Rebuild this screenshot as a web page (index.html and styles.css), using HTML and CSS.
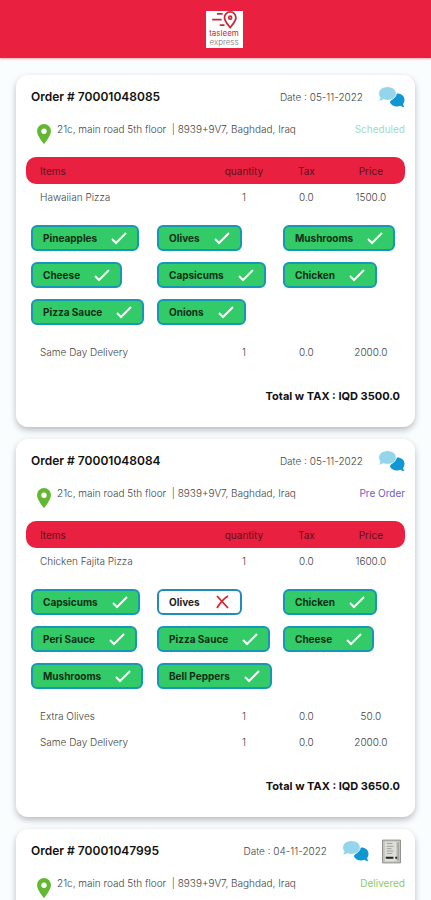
FILE: index.html
```html
<!DOCTYPE html>
<html lang="en">
<head>
<meta charset="utf-8">
<meta name="viewport" content="width=device-width, initial-scale=1">
<title>Tasleem Express orders</title>
<link rel="stylesheet" href="styles.css">
</head>
<body>
<svg class="sprite" aria-hidden="true">
  <symbol id="check" viewBox="0 0 16 14"><path d="M1 8 5 12 15 2" fill="none" stroke="#fff" stroke-width="2"/></symbol>
  <symbol id="cross" viewBox="0 0 16 14"><path d="M3 1 14 13M14 1C9 4 6 8 3 13" fill="none" stroke="#d5272f" stroke-width="1.8"/></symbol>
  <symbol id="pin" viewBox="0 0 14 20"><path fill="#63b832" fill-rule="evenodd" d="M7 0a7 7 0 0 0-7 7c0 5 7 13 7 13s7-8 7-13a7 7 0 0 0-7-7Zm0 4.500a2.700 2.700 0 1 1 0 5.400 2.700 2.700 0 0 1 0-5.400Z"/></symbol>
  <symbol id="chat" viewBox="0 0 27 22">
    <path fill="#1097d1" d="M19 7.500c4.500 0 7.500 2.600 7.500 6.200 0 1.900-.7 3.300-1.400 4.300.2 1.300.7 2.200 1.400 3-1.700 0-3-.4-4-1.200-1 .4-2.200.6-3.500.6-3.600 0-6.400-1.800-7.200-4.500Z"/>
    <path fill="#94d5ec" stroke="#fff" stroke-width=".7" d="M9.500.7c5 0 8.700 2.900 8.700 6.700s-3.700 6.900-8.700 6.900c-1.500 0-2.900-.2-4.100-.8-1.200.8-2.900 1.400-5 1.400 1-1 1.500-2 1.700-3.300C1.200 10.500.7 9 .7 7.400.7 3.600 4.500.7 9.500.7Z"/>
  </symbol>
</svg>

<header class="topbar">
  <div class="logo">
    <svg class="logo-mark" viewBox="0 0 38 19" aria-hidden="true">
      <g fill="none" stroke="#c82939" stroke-width="1.900">
        <path d="M11 3h6M6 9h10M14 15h5"/>
        <path d="M25 17.500c-3-4-6-7-6-10.500a6 6 0 0 1 12 0c0 3.500-3 6.500-6 10.500Z"/>
        <circle cx="25" cy="7" r="1.500"/>
      </g>
    </svg>
    <span class="logo-name">tasleem</span>
    <span class="logo-sub">express</span>
  </div>
</header>

<main class="orders">
  <article class="card">
    <div class="card-head">
      <h2>Order # 70001048085</h2>
      <span class="date">Date : 05-11-2022</span>
      <button class="icon-button" type="button" aria-label="Chat"><svg class="chat"><use href="#chat"/></svg></button>
    </div>
    <div class="address">
      <svg class="pin"><use href="#pin"/></svg>
      <span class="place">21c, main road 5th floor &nbsp;| 8939+9V7, Baghdad, Iraq</span>
      <span class="status scheduled">Scheduled</span>
    </div>
    <table class="items">
      <thead><tr><th class="name">Items</th><th class="qty">quantity</th><th class="tax">Tax</th><th class="price">Price</th></tr></thead>
      <tbody>
        <tr><td>Hawaiian Pizza</td><td>1</td><td>0.0</td><td>1500.0</td></tr>
        <tr><td class="extras" colspan="4">
          <ul class="chips">
            <li class="chip">Pineapples<svg><use href="#check"/></svg></li>
            <li class="chip">Olives<svg><use href="#check"/></svg></li>
            <li class="chip">Mushrooms<svg><use href="#check"/></svg></li>
            <li class="chip">Cheese<svg><use href="#check"/></svg></li>
            <li class="chip">Capsicums<svg><use href="#check"/></svg></li>
            <li class="chip">Chicken<svg><use href="#check"/></svg></li>
            <li class="chip">Pizza Sauce<svg><use href="#check"/></svg></li>
            <li class="chip">Onions<svg><use href="#check"/></svg></li>
          </ul>
        </td></tr>
        <tr><td>Same Day Delivery</td><td>1</td><td>0.0</td><td>2000.0</td></tr>
      </tbody>
    </table>
    <p class="total">Total w TAX : IQD 3500.0</p>
  </article>

  <article class="card">
    <div class="card-head">
      <h2>Order # 70001048084</h2>
      <span class="date">Date : 05-11-2022</span>
      <button class="icon-button" type="button" aria-label="Chat"><svg class="chat"><use href="#chat"/></svg></button>
    </div>
    <div class="address">
      <svg class="pin"><use href="#pin"/></svg>
      <span class="place">21c, main road 5th floor &nbsp;| 8939+9V7, Baghdad, Iraq</span>
      <span class="status preorder">Pre Order</span>
    </div>
    <table class="items">
      <thead><tr><th class="name">Items</th><th class="qty">quantity</th><th class="tax">Tax</th><th class="price">Price</th></tr></thead>
      <tbody>
        <tr><td>Chicken Fajita Pizza</td><td>1</td><td>0.0</td><td>1600.0</td></tr>
        <tr><td class="extras" colspan="4">
          <ul class="chips">
            <li class="chip">Capsicums<svg><use href="#check"/></svg></li>
            <li class="chip removed">Olives<svg><use href="#cross"/></svg></li>
            <li class="chip">Chicken<svg><use href="#check"/></svg></li>
            <li class="chip">Peri Sauce<svg><use href="#check"/></svg></li>
            <li class="chip">Pizza Sauce<svg><use href="#check"/></svg></li>
            <li class="chip">Cheese<svg><use href="#check"/></svg></li>
            <li class="chip">Mushrooms<svg><use href="#check"/></svg></li>
            <li class="chip">Bell Peppers<svg><use href="#check"/></svg></li>
          </ul>
        </td></tr>
        <tr><td>Extra Olives</td><td>1</td><td>0.0</td><td>50.0</td></tr>
        <tr><td>Same Day Delivery</td><td>1</td><td>0.0</td><td>2000.0</td></tr>
      </tbody>
    </table>
    <p class="total">Total w TAX : IQD 3650.0</p>
  </article>

  <article class="card">
    <div class="card-head">
      <h2>Order # 70001047995</h2>
      <span class="date">Date : 04-11-2022</span>
      <button class="icon-button" type="button" aria-label="Chat"><svg class="chat"><use href="#chat"/></svg></button>
      <button class="icon-button invoice-button" type="button" aria-label="Invoice">
        <svg class="invoice" viewBox="0 0 20 25">
          <path fill="#c3c3be" stroke="#8d8d89" d="M.5.5h19v24H.5Z"/>
          <path fill="#dfdfda" d="M3 2h12v21H3Z"/>
          <path fill="none" stroke="#8a8a86" stroke-width=".8" d="M5 4h6M5 7h7M5 9.500h5M5 12h7M5 14.500h6M17 3v19"/>
          <path stroke="#222" stroke-width="2" d="M4 19h8M14 19h2"/>
        </svg>
      </button>
    </div>
    <div class="address">
      <svg class="pin"><use href="#pin"/></svg>
      <span class="place">21c, main road 5th floor &nbsp;| 8939+9V7, Baghdad, Iraq</span>
      <span class="status delivered">Delivered</span>
    </div>
  </article>
</main>
</body>
</html>
```
FILE: styles.css
```css
* { box-sizing: border-box; }

html { scrollbar-width: none; }

body {
  margin: 0;
  background: #fafdfe;
  color: #444;
  font: 300 10px/16px Inter, "Open Sans", sans-serif;
}

.sprite { position: absolute; width: 0; height: 0; }

.topbar {
  display: flex;
  justify-content: center;
  padding: 11px 0 10px 17px;
  background: #e9203f;
  box-shadow: 0 1px 2px #f3a5b0;
}

.logo {
  display: flex;
  flex-direction: column;
  align-items: center;
  width: 37px;
  height: 37px;
  background: #fff;
  font-size: 8px;
  line-height: 9px;
}

.logo-mark { width: 37px; height: 18px; }
.logo-name { color: #c82939; font-weight: 400; }
.logo-sub { color: #777; }

.orders {
  display: flex;
  flex-direction: column;
  gap: 12px;
  padding: 17px 16px;
}

.card {
  padding: 8px 10px 23px;
  border-radius: 12px;
  background: #fff;
  box-shadow: 0 3px 6px rgba(60, 70, 85, 0.35);
}

.card-head {
  display: flex;
  align-items: center;
  height: 28px;
  padding-left: 5px;
}

h2 {
  flex: 1;
  margin: 0;
  color: #111;
  font-size: 12px;
  font-weight: 600;
}

.icon-button {
  display: flex;
  margin: 0 0 0 15px;
  padding: 0;
  border: 0;
  background: none;
}

.invoice-button { margin: 0 4px 0 13px; }

.chat { width: 27px; height: 22px; }
.invoice { width: 19px; height: 25px; }

.address {
  display: flex;
  align-items: flex-start;
  height: 36px;
  margin-top: 10px;
  padding-left: 11px;
}

.pin { width: 14px; height: 20px; margin: 3px 6px 0 0; }
.place { flex: 1; white-space: nowrap; }
.status { font-weight: 400; }
.scheduled { color: #9cdbc9; }
.preorder { color: #6c5cc4; }
.delivered { color: #8ccb68; }

.items {
  width: 100%;
  table-layout: fixed;
  border-collapse: separate;
  border-spacing: 0;
}

.name { width: 49%; }
.qty { width: 17%; }
.tax { width: 16%; }
.price { width: 18%; }

th {
  height: 27px;
  padding: 0;
  background: #e9203f;
  color: #5c1020;
  font-weight: 400;
}

td {
  height: 26px;
  padding: 0;
  text-align: center;
}

th:first-child, td:first-child { padding-left: 14px; text-align: left; }
th:first-child { border-radius: 10px 0 0 10px; }
th:last-child { border-radius: 0 10px 10px 0; }

.items .extras { padding: 15px 0 14px 5px; }

.chips {
  display: grid;
  grid-template-columns: repeat(3, 1fr);
  gap: 11px 4px;
  justify-items: start;
  margin: 0;
  padding: 0;
  list-style: none;
}

.chip {
  display: flex;
  align-items: center;
  gap: 14px;
  height: 26px;
  padding: 0 10px;
  border: 2px solid #1597b5;
  border-radius: 6px;
  background: #32cb67;
  color: #0d2d18;
  font-weight: 700;
  white-space: nowrap;
}

.chip svg { width: 16px; height: 14px; }
.removed { border-color: #218cba; background: #fff; color: #222; }

.total {
  margin: 23px 5px 0 0;
  color: #111;
  font-size: 11px;
  font-weight: 700;
  text-align: right;
}
```
